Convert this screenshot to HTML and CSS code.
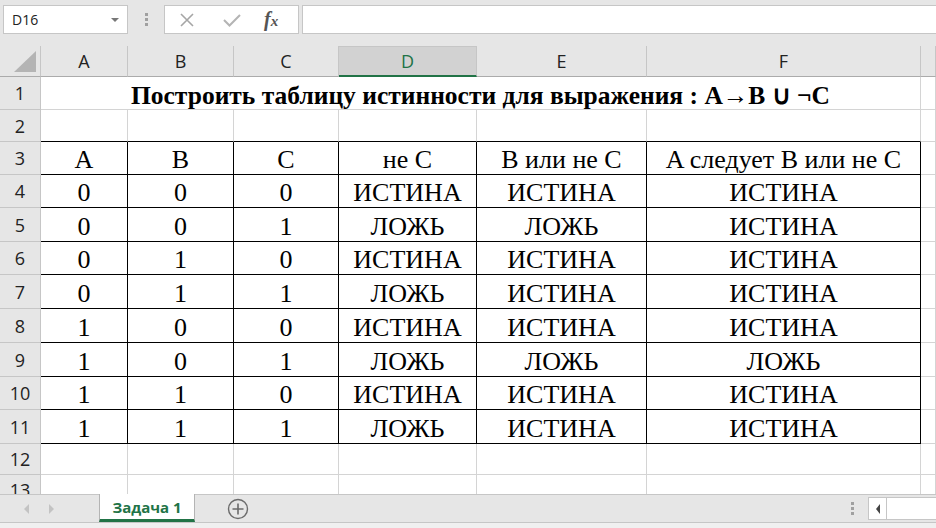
FILE: index.html
```html
<!DOCTYPE html>
<html lang="ru">
<head>
    <meta charset="UTF-8">
    <title>Задача 1</title>
    <link rel="stylesheet" href="styles.css">
</head>
<body>
    <div class="toolbar">
        <div class="name-box">
            <span>D16</span>
            <span class="drop"></span>
        </div>
        <div class="grip"><i></i><i></i><i></i></div>
        <div class="fx-buttons">
            <svg class="btn-x" width="16" height="16" viewBox="0 0 16 16"><path d="M2 2 L14 14 M14 2 L2 14" stroke="#a6a6a6" stroke-width="1.6" fill="none"/></svg>
            <svg class="btn-ok" width="20" height="16" viewBox="0 0 20 16"><path d="M2 8 L7.5 13.5 L18 3" stroke="#b4b4b4" stroke-width="2" fill="none"/></svg>
            <span class="fx">f<small>x</small></span>
        </div>
        <div class="formula"></div>
    </div>

    <div class="sheet">
        <!-- column headers -->
        <div class="corner"><span></span></div>
        <div class="ch">A</div>
        <div class="ch">B</div>
        <div class="ch">C</div>
        <div class="ch active">D</div>
        <div class="ch">E</div>
        <div class="ch">F</div>
        <div class="ch"></div>

        <!-- 1 -->
        <div class="rh">1</div>
        <div class="c title">Построить таблицу истинности для выражения : A→B ∪ ¬C</div>
        <div class="c"></div>

        <!-- 2 -->
        <div class="rh">2</div>
        <div class="c top"></div>
        <div class="c top"></div>
        <div class="c top"></div>
        <div class="c top"></div>
        <div class="c top"></div>
        <div class="c top"></div>
        <div class="c"></div>

        <!-- 3 -->
        <div class="rh">3</div>
        <div class="c b">A</div>
        <div class="c b">B</div>
        <div class="c b">C</div>
        <div class="c b">не C</div>
        <div class="c b">B или не C</div>
        <div class="c b">A следует B или не C</div>
        <div class="c"></div>

        <!-- 4 -->
        <div class="rh">4</div>
        <div class="c b">0</div>
        <div class="c b">0</div>
        <div class="c b">0</div>
        <div class="c b">ИСТИНА</div>
        <div class="c b">ИСТИНА</div>
        <div class="c b">ИСТИНА</div>
        <div class="c"></div>

        <!-- 5 -->
        <div class="rh">5</div>
        <div class="c b">0</div>
        <div class="c b">0</div>
        <div class="c b">1</div>
        <div class="c b">ЛОЖЬ</div>
        <div class="c b">ЛОЖЬ</div>
        <div class="c b">ИСТИНА</div>
        <div class="c"></div>

        <!-- 6 -->
        <div class="rh">6</div>
        <div class="c b">0</div>
        <div class="c b">1</div>
        <div class="c b">0</div>
        <div class="c b">ИСТИНА</div>
        <div class="c b">ИСТИНА</div>
        <div class="c b">ИСТИНА</div>
        <div class="c"></div>

        <!-- 7 -->
        <div class="rh">7</div>
        <div class="c b">0</div>
        <div class="c b">1</div>
        <div class="c b">1</div>
        <div class="c b">ЛОЖЬ</div>
        <div class="c b">ИСТИНА</div>
        <div class="c b">ИСТИНА</div>
        <div class="c"></div>

        <!-- 8 -->
        <div class="rh">8</div>
        <div class="c b">1</div>
        <div class="c b">0</div>
        <div class="c b">0</div>
        <div class="c b">ИСТИНА</div>
        <div class="c b">ИСТИНА</div>
        <div class="c b">ИСТИНА</div>
        <div class="c"></div>

        <!-- 9 -->
        <div class="rh">9</div>
        <div class="c b">1</div>
        <div class="c b">0</div>
        <div class="c b">1</div>
        <div class="c b">ЛОЖЬ</div>
        <div class="c b">ЛОЖЬ</div>
        <div class="c b">ЛОЖЬ</div>
        <div class="c"></div>

        <!-- 10 -->
        <div class="rh">10</div>
        <div class="c b">1</div>
        <div class="c b">1</div>
        <div class="c b">0</div>
        <div class="c b">ИСТИНА</div>
        <div class="c b">ИСТИНА</div>
        <div class="c b">ИСТИНА</div>
        <div class="c"></div>

        <!-- 11 -->
        <div class="rh">11</div>
        <div class="c b">1</div>
        <div class="c b">1</div>
        <div class="c b">1</div>
        <div class="c b">ЛОЖЬ</div>
        <div class="c b">ИСТИНА</div>
        <div class="c b">ИСТИНА</div>
        <div class="c"></div>

        <!-- 12 -->
        <div class="rh">12</div>
        <div class="c"></div>
        <div class="c"></div>
        <div class="c"></div>
        <div class="c"></div>
        <div class="c"></div>
        <div class="c"></div>
        <div class="c"></div>

        <!-- 13 -->
        <div class="rh">13</div>
        <div class="c"></div>
        <div class="c"></div>
        <div class="c"></div>
        <div class="c"></div>
        <div class="c"></div>
        <div class="c"></div>
        <div class="c"></div>
    </div>

    <div class="tabs">
        <div class="nav">
            <span class="arrow left"></span>
            <span class="arrow right"></span>
        </div>
        <div class="tab">Задача 1</div>
        <div class="add">
            <svg width="22" height="22" viewBox="0 0 22 22"><circle cx="11" cy="11" r="9.5" stroke="#6b6b6b" stroke-width="1.4" fill="none"/><path d="M11 5.5 V16.5 M5.5 11 H16.5" stroke="#6b6b6b" stroke-width="1.6"/></svg>
        </div>
        <div class="spacer"></div>
        <div class="grip tab-grip"><i></i><i></i><i></i></div>
        <div class="hscroll">
            <span class="hs-btn"><span class="arrow dark"></span></span>
        </div>
    </div>
    <div class="status"></div>
</body>
</html>
```

FILE: styles.css
```css
* {
    box-sizing: border-box;
}
body {
    margin: 0;
    width: 936px;
    height: 528px;
    overflow: hidden;
    background-color: #e6e6e6;
    font-family: "Open Sans", "Noto Sans", sans-serif;
}

/* formula bar */
.toolbar {
    display: flex;
    align-items: center;
    height: 46px;
    padding: 0 0 7px 3px;
}
.name-box {
    display: flex;
    align-items: center;
    justify-content: space-between;
    width: 125px;
    height: 29px;
    padding: 0 8px 0 8px;
    background-color: white;
    border: 1px solid #c6c6c6;
    font-size: 14px;
    color: #222;
}
.drop {
    width: 0;
    height: 0;
    border-left: 4px solid transparent;
    border-right: 4px solid transparent;
    border-top: 4px solid #777;
}
.grip {
    display: flex;
    flex-direction: column;
    gap: 2px;
    margin: 0 16px 0 17px;
}
.grip i {
    width: 3px;
    height: 3px;
    background-color: #a0a0a0;
}
.fx-buttons {
    display: flex;
    align-items: center;
    width: 135px;
    height: 29px;
    padding-left: 14px;
    background-color: white;
    border: 1px solid #c6c6c6;
}
.btn-ok {
    margin-left: 27px;
}
.fx {
    margin-left: 22px;
    font-family: "Liberation Serif", serif;
    font-style: italic;
    font-weight: bold;
    font-size: 20px;
    color: #555;
}
.fx small {
    font-size: 15px;
}
.formula {
    flex: 1;
    height: 29px;
    margin-left: 3px;
    background-color: white;
    border: 1px solid #c6c6c6;
    border-right: none;
}

/* grid */
.sheet {
    display: grid;
    grid-template-columns: 41px 87px 106px 105px 138px 170px 274px 1fr;
    grid-template-rows: 31px 33px 32px 33px 33px 34px 33px 34px 34px 34px 33px 34px 31px 31px;
    height: 448px;
    overflow: hidden;
    background-color: white;
}
.corner {
    position: relative;
    background-color: #e6e6e6;
    border-right: 1px solid #c6c6c6;
    border-bottom: 1px solid #ababab;
}
.corner span {
    position: absolute;
    right: 4px;
    bottom: 4px;
    width: 0;
    height: 0;
    border-left: 22px solid transparent;
    border-bottom: 21px solid #b4b4b4;
}
.ch {
    display: flex;
    align-items: center;
    justify-content: center;
    background-color: #e6e6e6;
    border-right: 1px solid #c6c6c6;
    border-bottom: 1px solid #ababab;
    font-size: 18px;
    color: #222;
}
.ch.active {
    background-color: #d2d2d2;
    border-top: 1px solid #c6c6c6;
    border-bottom: 2px solid #217346;
    color: #217346;
}
.rh {
    display: flex;
    align-items: center;
    justify-content: center;
    background-color: #e6e6e6;
    border-right: 1px solid #c6c6c6;
    border-bottom: 1px solid #c6c6c6;
    font-size: 18px;
    color: #222;
}
.c {
    display: flex;
    align-items: center;
    justify-content: center;
    padding-top: 4px;
    border-right: 1px solid #d4d4d4;
    border-bottom: 1px solid #d4d4d4;
    font-family: "Liberation Serif", serif;
    font-size: 26px;
    color: black;
    white-space: nowrap;
}
.c.title {
    grid-column: span 6;
    font-size: 25.5px;
    font-weight: bold;
}
.c.top {
    border-bottom-color: black;
}
.c.b {
    border-right-color: black;
    border-bottom-color: black;
}

/* sheet tabs */
.tabs {
    display: flex;
    align-items: stretch;
    height: 29px;
    border-top: 1px solid #c6c6c6;
    border-bottom: 1px solid #c6c6c6;
}
.nav {
    display: flex;
    align-items: center;
    gap: 20px;
    width: 99px;
    padding-left: 24px;
}
.arrow {
    width: 0;
    height: 0;
    border-top: 5px solid transparent;
    border-bottom: 5px solid transparent;
}
.arrow.left {
    border-right: 5px solid #c3c3c3;
}
.arrow.right {
    border-left: 5px solid #c3c3c3;
}
.arrow.dark {
    border-right: 4px solid #444;
}
.tab {
    display: flex;
    align-items: center;
    justify-content: center;
    width: 96px;
    margin-top: -1px;
    background-color: white;
    border-left: 1px solid #b4b4b4;
    border-right: 1px solid #b4b4b4;
    border-bottom: 3px solid #217346;
    font-size: 15px;
    font-weight: bold;
    color: #217346;
}
.add {
    display: flex;
    align-items: center;
    margin-left: 32px;
}
.spacer {
    flex: 1;
}
.tab-grip {
    align-self: center;
    margin: 0 14px 0 0;
}
.hscroll {
    display: flex;
    width: 68px;
    margin: 2px 0;
    background-color: white;
    border: 1px solid #c6c6c6;
    border-right: none;
}
.hs-btn {
    display: flex;
    align-items: center;
    justify-content: center;
    width: 18px;
    border-right: 1px solid #c6c6c6;
}
.status {
    height: 5px;
    background-color: #f0f0f0;
}
```
